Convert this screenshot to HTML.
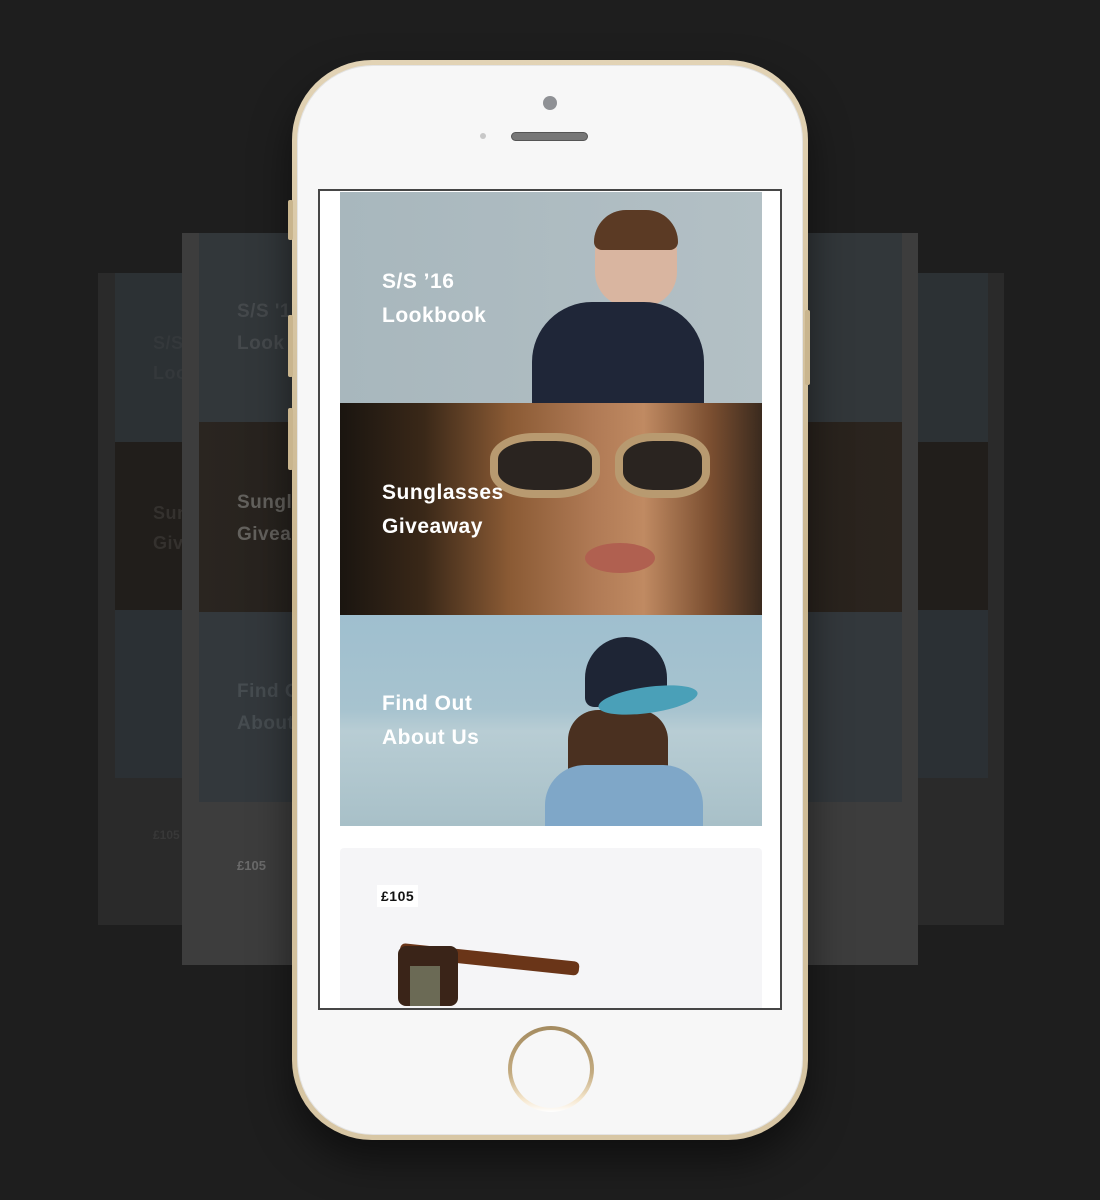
<!DOCTYPE html>
<html><head><meta charset="utf-8"><style>
*{margin:0;padding:0;box-sizing:border-box}
body{width:1100px;height:1200px;background:#1e1e1e;position:relative;overflow:hidden;font-family:"Liberation Sans","DejaVu Sans",sans-serif}
.a{position:absolute}
.t{position:absolute;color:#fff;font-weight:bold;font-size:21px;line-height:34px;letter-spacing:.5px}
</style></head><body>
<div class="a" style="left:98px;top:273px;width:906px;height:652px;background:#2a2a2a"></div>
<div class="a" style="left:115px;top:273px;width:873px;height:169px;background:#2c3134"></div>
<div class="a" style="left:115px;top:442px;width:873px;height:168px;background:#211e1b"></div>
<div class="a" style="left:115px;top:610px;width:873px;height:168px;background:#2b3034"></div>
<div class="t" style="left:153px;top:328px;color:#34383b;font-size:18px;line-height:30px">S/S<br>Loo</div>
<div class="t" style="left:153px;top:498px;color:#34312e;font-size:18px;line-height:30px">Sun<br>Giv</div>
<div class="a" style="left:153px;top:828px;color:#383838;font-size:12px;font-weight:bold">£105</div>
<div class="a" style="left:182px;top:233px;width:736px;height:732px;background:#3d3d3d"></div>
<div class="a" style="left:199px;top:233px;width:703px;height:189px;background:#32373a"></div>
<div class="a" style="left:199px;top:422px;width:703px;height:190px;background:linear-gradient(90deg,#2a2520,#201d1a 40%,#2b241e)"></div>
<div class="a" style="left:199px;top:612px;width:703px;height:190px;background:#33383c"></div>
<div class="t" style="left:237px;top:296px;color:#45494c;font-size:19px;line-height:32px">S/S '1<br>Look</div>
<div class="t" style="left:237px;top:487px;color:#63615d;font-size:19px;line-height:32px">Sungl<br>Givea</div>
<div class="t" style="left:237px;top:676px;color:#464c50;font-size:19px;line-height:32px">Find O<br>About</div>
<div class="a" style="left:237px;top:858px;color:#6a6a6a;font-size:13px;font-weight:bold">£105</div>
<div class="a" style="left:292px;top:60px;width:516px;height:1080px;border-radius:80px;background:linear-gradient(180deg,#e2d3b5,#c9b58e 50%,#d8c7a5);box-shadow:0 20px 40px rgba(0,0,0,.5)"></div>
<div class="a" style="left:297px;top:65px;width:506px;height:1070px;border-radius:76px;background:#f7f7f7;border:1px solid #e4e4e4"></div>
<div class="a" style="left:288px;top:200px;width:5px;height:40px;background:#c9b58e;border-radius:2px"></div>
<div class="a" style="left:288px;top:315px;width:5px;height:62px;background:#c9b58e;border-radius:2px"></div>
<div class="a" style="left:288px;top:408px;width:5px;height:62px;background:#c9b58e;border-radius:2px"></div>
<div class="a" style="left:805px;top:310px;width:5px;height:75px;background:#c9b58e;border-radius:2px"></div>
<div class="a" style="left:543px;top:96px;width:14px;height:14px;border-radius:50%;background:#8f9195"></div>
<div class="a" style="left:480px;top:133px;width:6px;height:6px;border-radius:50%;background:#c8c8c8"></div>
<div class="a" style="left:511px;top:132px;width:77px;height:9px;border-radius:5px;background:#777;border:1px solid #555"></div>
<div class="a" style="left:318px;top:189px;width:464px;height:821px;background:#fff;border:2px solid #464646;overflow:hidden">
 <div class="a" style="left:20px;top:1px;width:422px;height:212px;background:linear-gradient(90deg,#a8b7bd,#b3c0c5)">
  <div class="a" style="left:255px;top:20px;width:82px;height:95px;border-radius:40px 40px 35px 35px;background:#d9b5a0"></div>
  <div class="a" style="left:254px;top:18px;width:84px;height:40px;border-radius:40px 40px 10px 10px;background:#5b3a24"></div>
  <div class="a" style="left:192px;top:110px;width:172px;height:102px;border-radius:60px 60px 0 0;background:#1f2638"></div>
 </div>
 <div class="t" style="left:62px;top:74px">S/S ’16<br>Lookbook</div>
 <div class="a" style="left:20px;top:212px;width:422px;height:212px;background:linear-gradient(90deg,#1a1510 0%,#3a2818 20%,#8a5a34 40%,#b07a55 60%,#c08a62 72%,#7a4e30 88%,#3a2a1e 100%)">
  <div class="a" style="left:150px;top:30px;width:110px;height:65px;border-radius:40%;background:#2a2420;border:8px solid #b89a70"></div>
  <div class="a" style="left:275px;top:30px;width:95px;height:65px;border-radius:40%;background:#2a2420;border:8px solid #b89a70"></div>
  <div class="a" style="left:245px;top:140px;width:70px;height:30px;border-radius:50%;background:#b06050"></div>
 </div>
 <div class="t" style="left:62px;top:285px">Sunglasses<br>Giveaway</div>
 <div class="a" style="left:20px;top:424px;width:422px;height:211px;background:linear-gradient(180deg,#9fbfcf,#a7c3cf 45%,#b8cdd4 55%,#a8c0c8)">
  <div class="a" style="left:228px;top:95px;width:100px;height:116px;border-radius:30px 30px 0 0;background:#4a3020"></div>
  <div class="a" style="left:205px;top:150px;width:158px;height:61px;border-radius:40px 40px 0 0;background:#7fa7c8"></div>
  <div class="a" style="left:245px;top:22px;width:82px;height:70px;border-radius:45px 45px 10px 10px;background:#1e2535"></div>
  <div class="a" style="left:258px;top:72px;width:100px;height:26px;border-radius:50%;background:#4aa0b8;transform:rotate(-8deg)"></div>
 </div>
 <div class="t" style="left:62px;top:496px">Find Out<br>About Us</div>
 <div class="a" style="left:20px;top:657px;width:422px;height:170px;background:#f5f5f7;border-radius:4px">
  <div class="a" style="left:37px;top:37px;background:#fff;padding:3px 4px;font-size:14px;font-weight:bold;color:#111;letter-spacing:.5px">£105</div>
  <div class="a" style="left:60px;top:95px;width:180px;height:14px;background:#6a3518;border-radius:5px;transform:rotate(6deg);transform-origin:left"></div>
  <div class="a" style="left:58px;top:98px;width:60px;height:60px;background:#3a2418;border-radius:8px"></div>
  <div class="a" style="left:70px;top:118px;width:30px;height:40px;background:#6b6a55"></div>
 </div>
</div>
<div class="a" style="left:508px;top:1026px;width:86px;height:86px;border-radius:50%;background:linear-gradient(180deg,#a48b60,#c3ab80 55%,#f5e6cc 85%,#fff);"></div>
<div class="a" style="left:512px;top:1030px;width:78px;height:78px;border-radius:50%;background:#f7f7f7"></div>
</body></html>
